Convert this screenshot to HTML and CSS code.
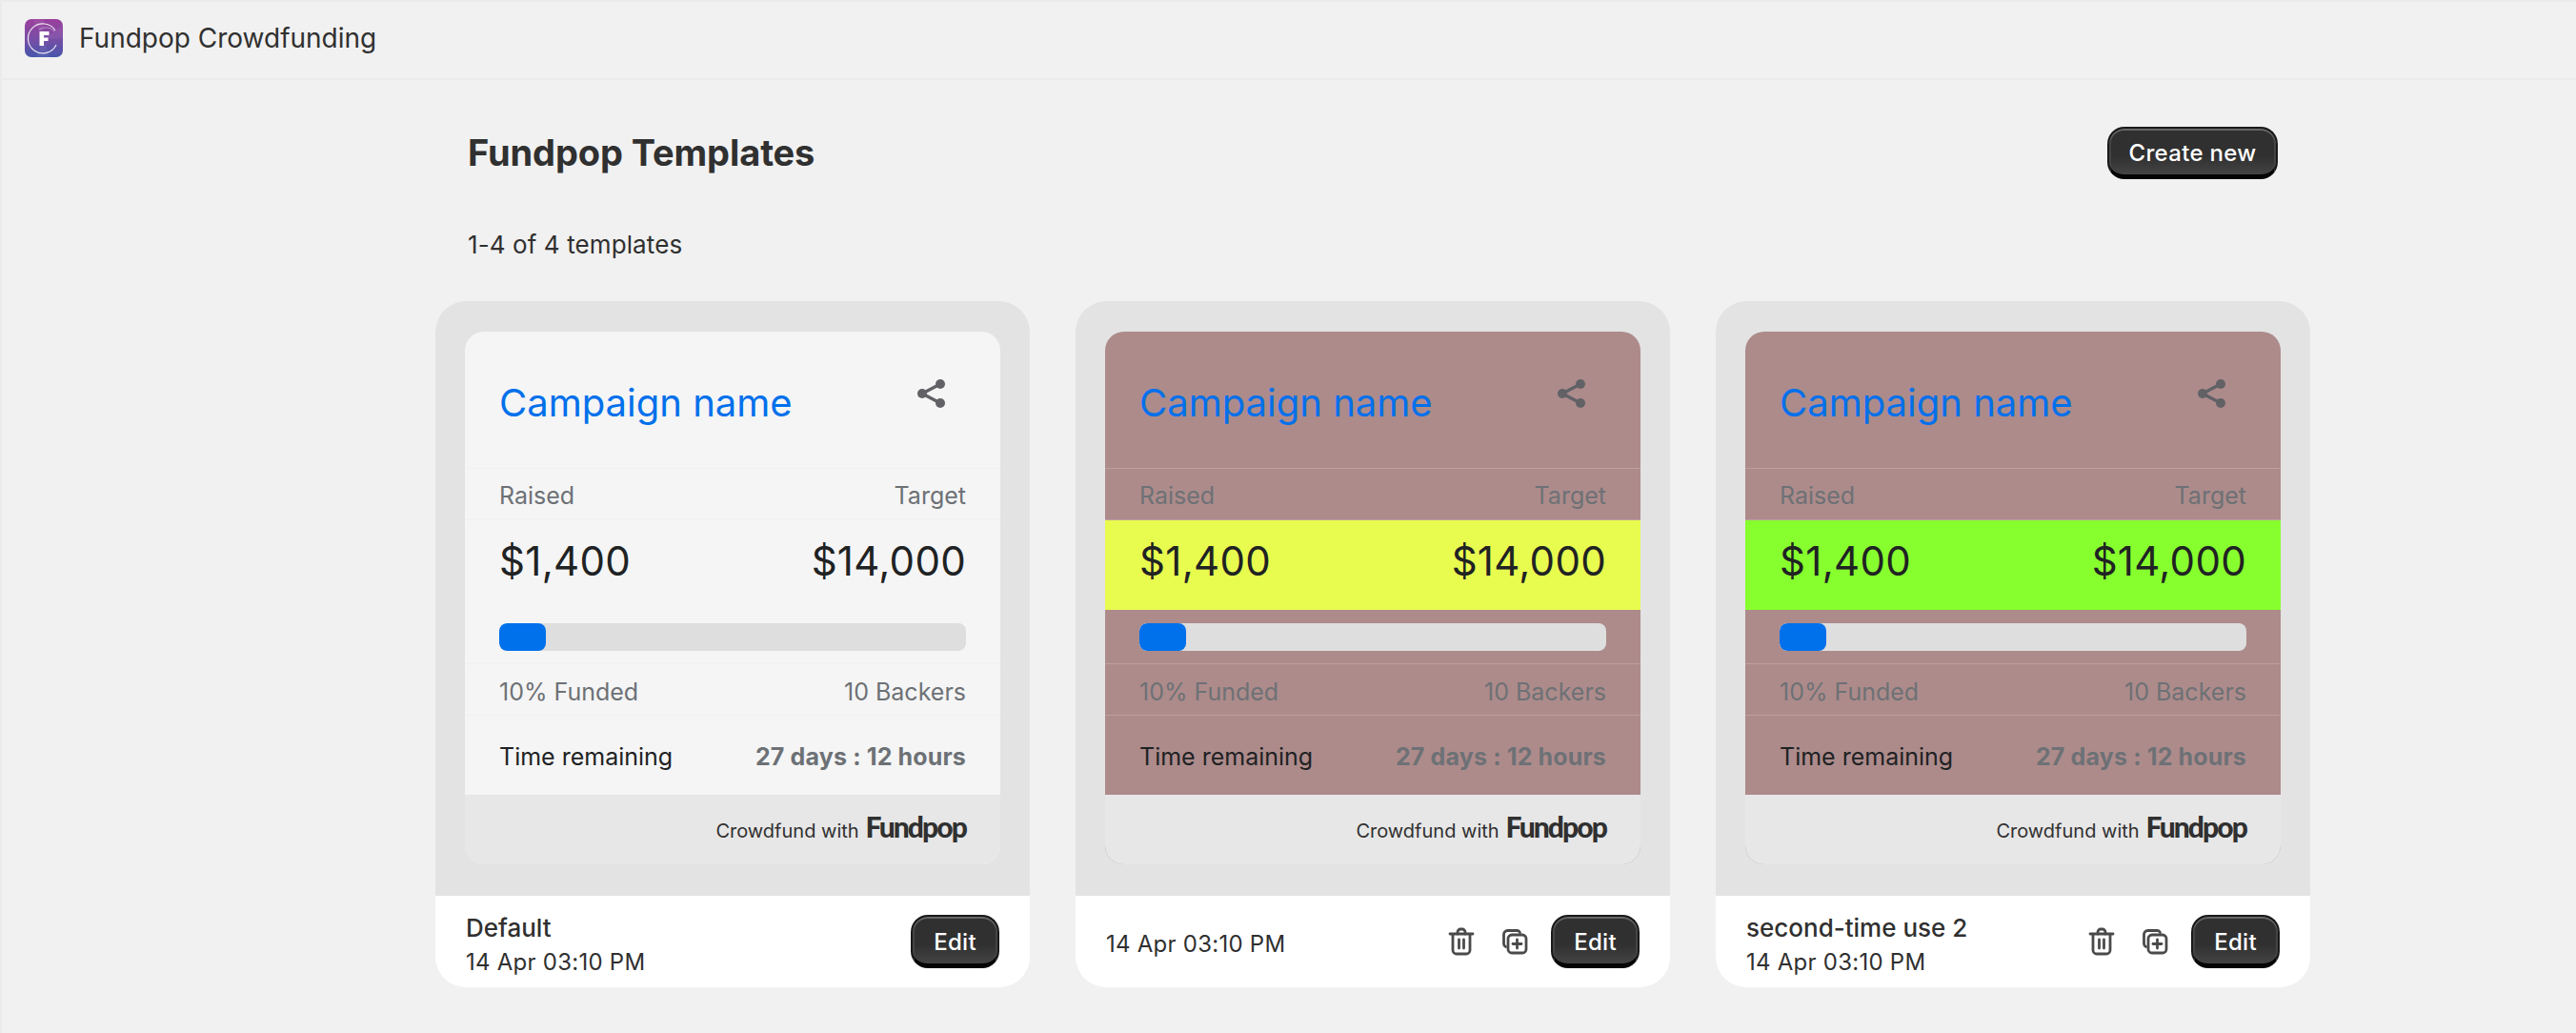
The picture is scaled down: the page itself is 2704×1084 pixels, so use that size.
FILE: index.html
```html
<!DOCTYPE html>
<html lang="en">
<head>
<meta charset="utf-8">
<title>Fundpop Templates</title>
<link rel="stylesheet" href="styles.css">
</head>
<body>
<header class="topbar">
  <svg class="app-logo" viewBox="0 0 40 40" aria-hidden="true">
    <defs>
      <linearGradient id="lg" x1="0" y1="0" x2="0" y2="1">
        <stop offset="0" stop-color="#9a3f9c"/><stop offset="0.5" stop-color="#7b4da5"/><stop offset="1" stop-color="#4555ab"/>
      </linearGradient>
    </defs>
    <rect width="40" height="40" rx="7" fill="url(#lg)"/>
    <path d="M20 21 L8 0 H20Z M20 21 L40 6 V20Z M20 21 L26 40 H12Z" fill="#fff" opacity=".06"/>
    <path d="M32 12 A15.500 15.500 0 1 0 33 27" fill="none" stroke="#fff" stroke-width="1.200" opacity=".85"/>
    <path d="M15 11 A12 12 0 0 1 31 13" fill="none" stroke="#fff" stroke-width=".8" opacity=".5"/>
    <path d="M15.500 13 H25.500 V17 H20 V19.500 H24.500 V23 H20 V28 H15.500Z" fill="#fff"/>
  </svg>
  <span class="app-name">Fundpop Crowdfunding</span>
</header>
<main class="page">
  <div class="page-head">
    <h1 class="page-title">Fundpop Templates</h1>
    <button class="btn btn-create">Create new</button>
  </div>
  <p class="count">1-4 of 4 templates</p>
  <div class="grid">

    <article class="tile">
      <div class="preview">
        <div class="widget">
          <div class="w-head"><span class="w-name">Campaign name</span><svg class="share" viewBox="0 0 30 30"><use href="#i-share"/></svg></div>
          <div class="w-row w-labels"><span>Raised</span><span>Target</span></div>
          <div class="w-row w-amounts"><span>$1,400</span><span>$14,000</span></div>
          <div class="w-bar"><div class="track"><div class="fill" style="width:10%"></div></div></div>
          <div class="w-row w-stats"><span>10% Funded</span><span>10 Backers</span></div>
          <div class="w-row w-time"><span>Time remaining</span><b>27 days : 12 hours</b></div>
          <div class="w-foot"><span>Crowdfund with</span><span class="brand">Fundpop</span></div>
        </div>
      </div>
      <div class="meta">
        <div class="meta-text"><div class="meta-name">Default</div><div class="meta-date">14 Apr 03:10 PM</div></div>
        <button class="btn btn-edit">Edit</button>
      </div>
    </article>

    <article class="tile">
      <div class="preview">
        <div class="widget tinted">
          <div class="w-head"><span class="w-name">Campaign name</span><svg class="share" viewBox="0 0 30 30"><use href="#i-share"/></svg></div>
          <div class="w-row w-labels"><span>Raised</span><span>Target</span></div>
          <div class="w-row w-amounts yellow"><span>$1,400</span><span>$14,000</span></div>
          <div class="w-bar"><div class="track"><div class="fill" style="width:10%"></div></div></div>
          <div class="w-row w-stats"><span>10% Funded</span><span>10 Backers</span></div>
          <div class="w-row w-time"><span>Time remaining</span><b>27 days : 12 hours</b></div>
          <div class="w-foot"><span>Crowdfund with</span><span class="brand">Fundpop</span></div>
        </div>
      </div>
      <div class="meta">
        <div class="meta-text"><div class="meta-date">14 Apr 03:10 PM</div></div>
        <svg class="act" viewBox="0 0 30 30"><use href="#i-trash"/></svg>
        <svg class="act" viewBox="0 0 30 30"><use href="#i-dup"/></svg>
        <button class="btn btn-edit">Edit</button>
      </div>
    </article>

    <article class="tile">
      <div class="preview">
        <div class="widget tinted">
          <div class="w-head"><span class="w-name">Campaign name</span><svg class="share" viewBox="0 0 30 30"><use href="#i-share"/></svg></div>
          <div class="w-row w-labels"><span>Raised</span><span>Target</span></div>
          <div class="w-row w-amounts green"><span>$1,400</span><span>$14,000</span></div>
          <div class="w-bar"><div class="track"><div class="fill" style="width:10%"></div></div></div>
          <div class="w-row w-stats"><span>10% Funded</span><span>10 Backers</span></div>
          <div class="w-row w-time"><span>Time remaining</span><b>27 days : 12 hours</b></div>
          <div class="w-foot"><span>Crowdfund with</span><span class="brand">Fundpop</span></div>
        </div>
      </div>
      <div class="meta">
        <div class="meta-text"><div class="meta-name">second-time use 2</div><div class="meta-date">14 Apr 03:10 PM</div></div>
        <svg class="act" viewBox="0 0 30 30"><use href="#i-trash"/></svg>
        <svg class="act" viewBox="0 0 30 30"><use href="#i-dup"/></svg>
        <button class="btn btn-edit">Edit</button>
      </div>
    </article>

  </div>
</main>
<svg class="defs" aria-hidden="true">
  <symbol id="i-share" viewBox="0 0 30 30">
    <path d="M24 5 L5 15 L24 25" fill="none" stroke="#616166" stroke-width="3.400"/>
    <circle cx="24" cy="5" r="5" fill="#616166"/><circle cx="5" cy="15" r="5" fill="#616166"/><circle cx="24" cy="25" r="5" fill="#616166"/>
  </symbol>
  <symbol id="i-trash" viewBox="0 0 30 30">
    <g fill="none" stroke="#4a4a4a" stroke-width="2.800" stroke-linecap="round" stroke-linejoin="round">
      <path d="M3 7 H27"/><path d="M11 7 V5 A3 3 0 0 1 14 2 H16 A3 3 0 0 1 19 5 V7"/>
      <path d="M6 8 V24 A4 4 0 0 0 10 28 H20 A4 4 0 0 0 24 24 V8"/><path d="M12.500 13 V22"/><path d="M17.500 13 V22"/>
    </g>
  </symbol>
  <symbol id="i-dup" viewBox="0 0 30 30">
    <g fill="none" stroke="#4a4a4a" stroke-width="2.800" stroke-linecap="round" stroke-linejoin="round">
      <path d="M20.500 5.500 A3.500 3.500 0 0 0 17.500 3.500 H7.500 A4 4 0 0 0 3.500 7.500 V17.500 A3.500 3.500 0 0 0 5.500 20.500"/>
      <rect x="8" y="8" width="19" height="19" rx="4"/>
      <path d="M17.500 13 V22"/><path d="M13 17.500 H22"/>
    </g>
  </symbol>
</svg>
</body>
</html>
```

FILE: styles.css
```css
* { box-sizing: border-box; }
html, body { margin: 0; height: 100%; }
body {
  background: #f1f1f1;
  color: #303030;
  font-family: Inter, "Liberation Sans", sans-serif;
  overflow: hidden;
  border-left: 2px solid #ebebeb;
}
.topbar {
  height: 84px;
  display: flex;
  align-items: center;
  gap: 17px;
  padding: 0 0 2px 24px;
  border-bottom: 2px solid #ebebeb;
  box-shadow: inset 0 2px 0 #ebebeb;
}
.app-logo { width: 40px; height: 40px; flex: none; }
.app-name { font-size: 28px; line-height: 40px; }
.page { padding: 0 0 0 455px; }
.page-head {
  width: 1900px;
  height: 152px;
  margin-left: 34px;
  display: flex;
  align-items: center;
  justify-content: space-between;
}
.page-title { margin: 0; font-size: 38px; line-height: 52px; font-weight: 700; letter-spacing: -.1px; }
.btn {
  font-family: inherit;
  color: #fff;
  border: 2px solid #1a1a1a;
  border-bottom: 5px solid #050505;
  font-weight: 500;
  background: linear-gradient(#303030 60%, #444);
  box-shadow: inset 0 2px 0 #666, inset 2px 0 0 #444, inset -2px 0 0 #444;
  border-radius: 18px;
  padding: 3px 0 0;
  letter-spacing: .3px;
}
.btn-create { width: 179px; height: 55px; font-size: 24px; }
.count { margin: 1px 0 0 34px; font-size: 26px; line-height: 40px; letter-spacing: .1px; }
.grid {
  display: grid;
  grid-template-columns: repeat(3, 624px);
  gap: 48px;
  margin-top: 39px;
}
.tile { width: 624px; height: 720px; border-radius: 32px; overflow: hidden; background: #fff; }
.preview { height: 624px; background: #e3e3e3; padding: 32px 31px 0; }
.widget { height: 559px; border-radius: 20px; overflow: hidden; background: #f5f5f5; }
.w-head {
  height: 144px;
  padding: 0 36px;
  display: flex;
  justify-content: space-between;
  border-bottom: 1px solid #f1f1f1;
}
.w-name { font-size: 40px; line-height: 48px; margin-top: 51px; color: #0070eb; }
.share { width: 30px; height: 30px; margin: 50px 21px 0 0; }
.w-row { display: flex; justify-content: space-between; align-items: center; padding: 0 36px; }
.w-labels { height: 54px; padding-top: 2px; font-size: 25px; color: #6d7175; border-bottom: 1px solid #f1f1f1; }
.w-amounts { height: 94px; padding-bottom: 10px; font-size: 42px; letter-spacing: .3px; color: #202223; }
.w-bar { height: 57px; padding: 14px 36px 0; border-bottom: 1px solid #f1f1f1; }
.track { height: 29px; border-radius: 8px; background: #dedede; overflow: hidden; }
.fill { height: 100%; border-radius: 8px; background: #0070eb; }
.w-stats { height: 54px; padding-top: 5px; font-size: 25px; color: #6d7175; border-bottom: 1px solid #f1f1f1; }
.w-time { height: 83px; padding-top: 2px; font-size: 25px; color: #202223; }
.w-time b { font-weight: 700; color: #6d7175; letter-spacing: .15px; }
.w-foot {
  height: 73px;
  display: flex;
  align-items: baseline;
  justify-content: flex-end;
  gap: 7px;
  padding: 18px 36px 0;
  background: #e7e7e7;
  font-size: 20px;
  color: #303030;
}
.brand { font-family: Lato, Inter, sans-serif; font-size: 30px; line-height: 1; font-weight: 900; letter-spacing: -1.9px; }
.tinted { background: #ad8b8b; }
.tinted .w-head, .tinted .w-labels, .tinted .w-bar, .tinted .w-stats { border-bottom-color: #bd9f9f; }
.yellow { background: #e8fb4f; }
.green { background: #87ff2e; }
.meta { height: 96px; display: flex; align-items: center; gap: 26px; padding: 0 32px; }
.meta-text { flex: 1; min-width: 0; padding-top: 5px; }
.meta-name { font-size: 26px; line-height: 38px; font-weight: 500; }
.meta-date { font-size: 24px; line-height: 34px; letter-spacing: .25px; }
.btn-edit { width: 93px; height: 56px; flex: none; font-size: 24px; }
.act { width: 30px; height: 30px; flex: none; }
.act + .btn-edit { margin-left: -3px; }
.defs { position: absolute; width: 0; height: 0; }
```
